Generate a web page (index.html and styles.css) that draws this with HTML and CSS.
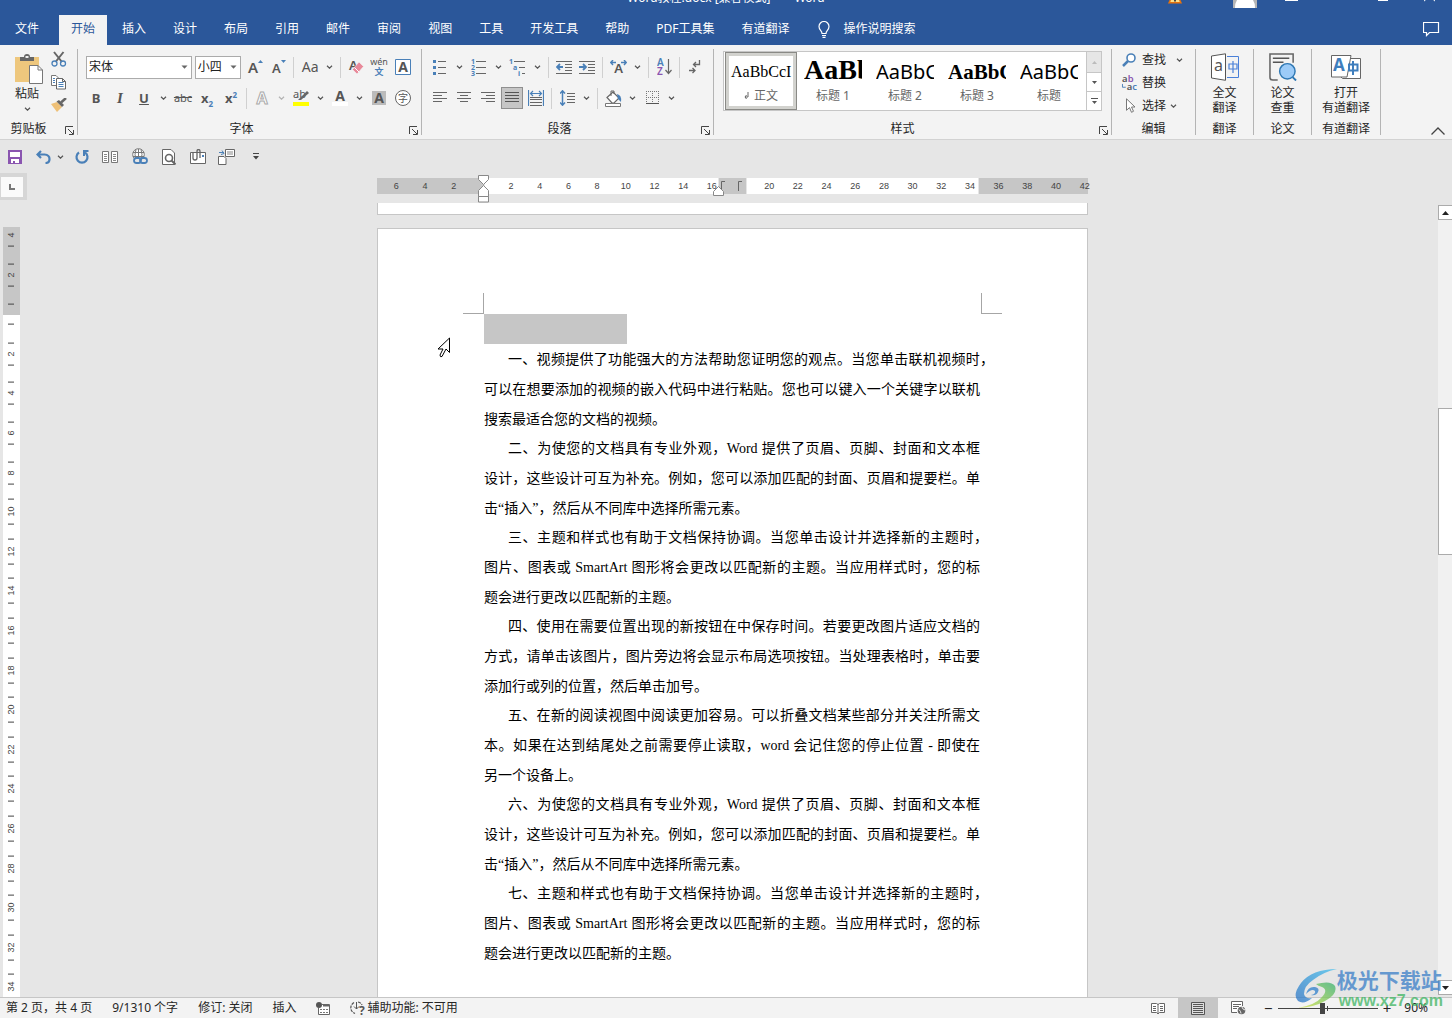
FILE: index.html
```html
<!DOCTYPE html>
<html lang="zh-CN">
<head>
<meta charset="utf-8">
<title>Word教程.docx [兼容模式] - Word</title>
<link rel="stylesheet" href="styles.css">
</head>
<body>
<svg class="defs" aria-hidden="true">
  <symbol id="chev" viewBox="0 0 7 4"><path d="M1 .8 3.5 3.2 6 .8" fill="none" stroke="#555" stroke-width="1.2"/></symbol>
  <symbol id="tri" viewBox="0 0 7 4"><path d="M.5.5h6L3.5 3.8z" fill="#666"/></symbol>
  <symbol id="launch" viewBox="0 0 9 9"><path d="M.5 8V.5H8M3 3l5 5M8.5 4v4.5H4" fill="none" stroke="#444"/></symbol>
</svg>

<header class="top">
  <div class="titlebar">
    <span></span>
    <div class="title"><span>Word教程.docx [兼容模式]</span><span>-</span><span>Word</span></div>
    <div class="window-tools">
      <svg class="warn" width="14" height="4" viewBox="0 0 14 4"><path d="M1.500 0h11L14 3.500H0z" fill="#e8730c"/><path d="M3 0h8l.8 2H2.300z" fill="#fde08a"/><path d="M6 0h2v1.500H6z" fill="#444"/></svg>
      <button aria-label="账户"><svg width="24" height="8" viewBox="0 0 24 8"><path d="M0 0h24v8H0z" fill="#b4b4b4"/><path d="M4 0h16q2 3 2 8H2q0-5 2-8z" fill="#fff"/></svg></button>
      <button aria-label="功能区显示选项"><svg width="13" height="2"><path d="M0 0h13v1H0z" fill="#fff"/></svg></button>
      <button aria-label="最小化"></button>
      <button aria-label="向下还原"><svg width="10" height="2"><path d="M0 0h10v1H0z" fill="#fff"/></svg></button>
      <button aria-label="关闭"><svg width="11" height="2"><path d="M0 1 1.500 0M11 1 9.500 0" stroke="#fff"/></svg></button>
    </div>
  </div>
  <nav class="tabs">
    <button class="file">文件</button>
    <button class="active">开始</button>
    <button>插入</button>
    <button>设计</button>
    <button>布局</button>
    <button>引用</button>
    <button>邮件</button>
    <button>审阅</button>
    <button>视图</button>
    <button>工具</button>
    <button>开发工具</button>
    <button>帮助</button>
    <button>PDF工具集</button>
    <button>有道翻译</button>
    <button class="tell"><svg width="12" height="17" viewBox="0 0 12 17"><path d="M4 12.500c0-3-3-3.500-3-7a5 5 0 0 1 10 0c0 3.500-3 4-3 7zM4 14.500h4M4.500 16.300h3" fill="none" stroke="#fff" stroke-width="1.200"/></svg>操作说明搜索</button>
    <button class="comment" aria-label="批注"><svg width="17" height="16" viewBox="0 0 17 16"><path d="M.5 1.500h15v10H6.500l-3 3v-3h-3z" fill="none" stroke="#fff" stroke-width="1.200"/></svg></button>
  </nav>
</header>

<section class="ribbon">
  <div class="group clipboard">
    <div class="clip-body">
      <button class="paste">
        <svg width="30" height="31" viewBox="0 0 30 31"><path d="M1 3h24v25H1z" fill="#eec77d"/><path d="M6 7V3h4q0-3 3-3t3 3h4v4z" fill="#666"/><path d="M11.500 2h3v2h-3z" fill="#eee"/><path d="M15.500 11.500h8.500l4.500 4.500v13.500h-13z" fill="#fff" stroke="#777"/><path d="M24 11.500V16h4.500" fill="none" stroke="#777"/></svg>
        <span>粘贴</span><svg width="7" height="4"><use href="#chev"/></svg>
      </button>
      <div class="clip-tools">
        <button aria-label="剪切"><svg width="16" height="16" viewBox="0 0 16 16"><path d="M3 1l8 10M12.500 1l-8 10" stroke="#666" stroke-width="2"/><circle cx="3.500" cy="12.500" r="2.500" fill="none" stroke="#4a80b8" stroke-width="1.300"/><circle cx="12" cy="12.500" r="2.500" fill="none" stroke="#4a80b8" stroke-width="1.300"/></svg></button>
        <button aria-label="复制"><svg width="16" height="15" viewBox="0 0 16 15"><path d="M6.500 10.500h-6V.5H5L7.500 3" fill="#fff" stroke="#777"/><path d="M5.500 3.500h6l3 3v7.500h-9z" fill="#fff" stroke="#666"/><path d="M11.500 3.500v3h3" fill="none" stroke="#666"/><path d="M2 3.500h2M2 5.500h2M2 7.500h2M7.500 7.500h5M7.500 9.500h5M7.500 11.500h5" stroke="#4a80b8"/></svg></button>
        <button aria-label="格式刷"><svg width="16" height="14" viewBox="0 0 16 14"><path d="M0 6l6-2 5 5-5 5z" fill="#eec077"/><path d="M5.500 3.500 8 2l5 5-2 2z" fill="#666"/><path d="M10 4.500 15 0" stroke="#666" stroke-width="2.500"/></svg></button>
      </div>
    </div>
    <div class="label">剪贴板<svg class="launch" width="9" height="9"><use href="#launch"/></svg></div>
  </div>

  <div class="group font">
    <div class="rows">
      <div class="row">
        <label class="combo family"><select aria-label="字体"><option>宋体</option></select><svg width="7" height="4"><use href="#tri"/></svg></label>
        <label class="combo size"><select aria-label="字号"><option>小四</option></select><svg width="7" height="4"><use href="#tri"/></svg></label>
        <button class="ic" aria-label="增大字号"><svg width="16" height="16" viewBox="0 0 16 16"><path d="M11 4l2.500-3L16 4z" fill="#4a80b8"/><text x="1" y="14" class="t15">A</text></svg></button>
        <button class="ic" aria-label="减小字号"><svg width="16" height="16" viewBox="0 0 16 16"><path d="M10 1h5l-2.500 3z" fill="#4a80b8"/><text x="1" y="14" class="t13">A</text></svg></button>
        <i class="sep"></i>
        <button class="ic wide" aria-label="更改大小写"><span class="aa">Aa</span></button><button class="dd" aria-label="更多"><svg width="7" height="4"><use href="#chev"/></svg></button>
        <i class="sep"></i>
        <button class="ic" aria-label="清除格式"><svg width="16" height="16" viewBox="0 0 16 16"><text x="1" y="11" class="t13">A</text><path d="M4.500 10.500 11 3l4.500 4.500L9 15z" fill="#e8899a" stroke="#f3f3f3" stroke-width=".6"/><path d="m6.500 8.500 4.500 4.500" stroke="#fff"/></svg></button>
        <button class="ic" aria-label="拼音指南"><svg width="18" height="18" viewBox="0 0 18 18"><text x="9" y="7" text-anchor="middle" class="pinyin">wén</text><text x="9" y="17" text-anchor="middle" class="hanzi blue">文</text></svg></button>
        <button class="ic" aria-label="字符边框"><svg width="16" height="16" viewBox="0 0 16 16"><path d="M.5.5h15v15H.5z" fill="#fff" stroke="#4a80b8"/><text x="8" y="13" text-anchor="middle" class="t14">A</text></svg></button>
      </div>
      <div class="row">
        <button class="ic bold">B</button>
        <button class="ic italic">I</button>
        <button class="ic under">U</button><button class="dd" aria-label="下划线"><svg width="7" height="4"><use href="#chev"/></svg></button>
        <button class="ic strike">abc</button>
        <button class="ic script"><span>x<sub>2</sub></span></button>
        <button class="ic script"><span>x<sup>2</sup></span></button>
        <i class="sep"></i>
        <button class="ic" aria-label="文本效果"><svg width="16" height="16" viewBox="0 0 16 16"><text x="8" y="14" text-anchor="middle" class="outline">A</text></svg></button><button class="dd faint" aria-label="文本效果选项"><svg width="7" height="4"><use href="#chev"/></svg></button>
        <button class="ic" aria-label="突出显示"><svg width="17" height="18" viewBox="0 0 17 18"><text x="0" y="9" class="t11">ab</text><path d="M5 11 14 2l2 2-8 7z" fill="#666"/><path d="M0 13h16v4H0z" fill="#ff0"/></svg></button><button class="dd" aria-label="突出显示选项"><svg width="7" height="4"><use href="#chev"/></svg></button>
        <button class="ic" aria-label="字体颜色"><svg width="16" height="18" viewBox="0 0 16 18"><text x="8" y="12" text-anchor="middle" class="t14">A</text><path d="M0 13h16v4H0z" fill="#fff"/></svg></button><button class="dd" aria-label="字体颜色选项"><svg width="7" height="4"><use href="#chev"/></svg></button>
        <button class="ic" aria-label="字符底纹"><svg width="14" height="14" viewBox="0 0 14 14"><path d="M0 0h14v14H0z" fill="#bbb"/><text x="7" y="12" text-anchor="middle" class="t14">A</text></svg></button>
        <button class="ic" aria-label="带圈字符"><svg width="16" height="16" viewBox="0 0 16 16"><circle cx="8" cy="8" r="7.500" fill="#fff" stroke="#666"/><text x="8" y="12" text-anchor="middle" class="ring">字</text></svg></button>
      </div>
    </div>
    <div class="label">字体<svg class="launch" width="9" height="9"><use href="#launch"/></svg></div>
  </div>

  <div class="group para">
    <div class="rows">
      <div class="row">
        <button class="ic" aria-label="项目符号"><svg width="14" height="16" viewBox="0 0 14 16"><path d="M0 1h3v3H0zM0 7h3v3H0zM0 13h3v3H0z" fill="#4a80b8"/><path d="M5 2.500h8M5 8.500h8M5 14.500h8" stroke="#666"/></svg></button><button class="dd" aria-label="项目符号选项"><svg width="7" height="4"><use href="#chev"/></svg></button>
        <button class="ic" aria-label="编号"><svg width="16" height="18" viewBox="0 0 16 18"><text x="0" y="6" class="num">1</text><text x="0" y="12" class="num">2</text><text x="0" y="18" class="num">3</text><path d="M5 3.500h10M5 9.500h10M5 15.500h10" stroke="#666"/></svg></button><button class="dd" aria-label="编号选项"><svg width="7" height="4"><use href="#chev"/></svg></button>
        <button class="ic" aria-label="多级列表"><svg width="17" height="18" viewBox="0 0 17 18"><text x="0" y="6" class="num">1</text><text x="4" y="12" class="num">a</text><text x="9" y="18" class="num">i</text><path d="M5 3.500h11M10 9.500h6M13 15.500h3" stroke="#666"/></svg></button><button class="dd" aria-label="多级列表选项"><svg width="7" height="4"><use href="#chev"/></svg></button>
        <i class="sep"></i>
        <button class="ic" aria-label="减少缩进"><svg width="16" height="14" viewBox="0 0 16 14"><path d="M0 1.500h16M9 4.500h7M9 7.500h7M9 10.500h7M0 13.500h16" stroke="#666"/><path d="M7 7H1.500M4 4 1 7l3 3" fill="none" stroke="#4a80b8" stroke-width="1.800"/></svg></button>
        <button class="ic" aria-label="增加缩进"><svg width="16" height="14" viewBox="0 0 16 14"><path d="M0 1.500h16M9 4.500h7M9 7.500h7M9 10.500h7M0 13.500h16" stroke="#666"/><path d="M0 7h5.500M4 4l3 3-3 3" fill="none" stroke="#4a80b8" stroke-width="1.800"/></svg></button>
        <i class="sep"></i>
        <button class="ic" aria-label="中文版式"><svg width="17" height="14" viewBox="0 0 17 14"><text x="8.500" y="13" text-anchor="middle" class="t13">A</text><path d="M6 2.500H1M3 0 .8 2.500 3 5M11 2.500h5M14 0l2.200 2.500L14 5" fill="none" stroke="#4a80b8" stroke-width="1.400"/></svg></button><button class="dd" aria-label="中文版式选项"><svg width="7" height="4"><use href="#chev"/></svg></button>
        <i class="sep"></i>
        <button class="ic" aria-label="排序"><svg width="15" height="18" viewBox="0 0 15 18"><text x="0" y="8" class="t10 blue">A</text><text x="0" y="17" class="t10 violet">Z</text><path d="M11.500 1v14M8.500 12l3 3.500 3-3.500" fill="none" stroke="#666" stroke-width="1.200"/></svg></button>
        <i class="sep"></i>
        <button class="ic" aria-label="显示编辑标记"><svg width="12" height="14" viewBox="0 0 12 14"><path d="M10.500 0v4.500H4.500M7 2 4.500 4.500 7 7M0 10.500h5.500M3.500 8 6 10.500 3.500 13" fill="none" stroke="#666" stroke-width="1.300"/></svg></button>
      </div>
      <div class="row">
        <button class="ic" aria-label="左对齐"><svg width="14" height="12" viewBox="0 0 14 12"><path d="M0 .5h14M0 3.500h9M0 6.500h14M0 9.500h9" stroke="#666"/></svg></button>
        <button class="ic" aria-label="居中"><svg width="14" height="12" viewBox="0 0 14 12"><path d="M0 .5h14M3 3.500h8M0 6.500h14M3 9.500h8" stroke="#666"/></svg></button>
        <button class="ic" aria-label="右对齐"><svg width="14" height="12" viewBox="0 0 14 12"><path d="M0 .5h14M5 3.500h9M0 6.500h14M5 9.500h9" stroke="#666"/></svg></button>
        <button class="ic on" aria-label="两端对齐"><svg width="14" height="12" viewBox="0 0 14 12"><path d="M0 .5h14M0 3.500h14M0 6.500h14M0 9.500h14" stroke="#555"/></svg></button>
        <button class="ic" aria-label="分散对齐"><svg width="16" height="17" viewBox="0 0 16 17"><path d="M.5 0v16M15.500 0v16M3 3.500h10M5 1 2.500 3.500 5 6M11 1l2.500 2.500L11 6" fill="none" stroke="#4a80b8" stroke-width="1.200"/><path d="M2 7.500h12M2 9.500h12M2 12.500h12M2 15.500h12" stroke="#666"/></svg></button>
        <i class="sep"></i>
        <button class="ic" aria-label="行距"><svg width="15" height="16" viewBox="0 0 15 16"><path d="M2.500 1v14M0 3.500 2.500.8 5 3.500M0 12.500l2.500 2.700L5 12.500" fill="none" stroke="#4a80b8" stroke-width="1.500"/><path d="M7 3.500h8M7 6.500h8M7 9.500h8M7 12.500h8" stroke="#666"/></svg></button><button class="dd" aria-label="行距选项"><svg width="7" height="4"><use href="#chev"/></svg></button>
        <i class="sep"></i>
        <button class="ic" aria-label="底纹"><svg width="17" height="17" viewBox="0 0 17 17"><path d="M2 7.500 8 2l6 6-5 5H7z" fill="#fff" stroke="#666" stroke-width="1.200"/><path d="M6 6V1h3v3" fill="none" stroke="#666"/><path d="M12 4q5 1 4 8l-3-3z" fill="#4a80b8"/><path d="M.5 13.500h15v3H.5z" fill="#fff" stroke="#777"/></svg></button><button class="dd" aria-label="底纹选项"><svg width="7" height="4"><use href="#chev"/></svg></button>
        <button class="ic" aria-label="边框"><svg width="13" height="14" viewBox="0 0 13 14"><path d="M0 .5h13M0 6.500h13M.5 0v12M6.500 0v12M12.500 0v12" stroke="#777" stroke-dasharray="1 1"/><path d="M0 12.500h13" stroke="#555"/></svg></button><button class="dd" aria-label="边框选项"><svg width="7" height="4"><use href="#chev"/></svg></button>
      </div>
    </div>
    <div class="label">段落<svg class="launch" width="9" height="9"><use href="#launch"/></svg></div>
  </div>

  <div class="group styles">
    <div class="gallery">
      <button class="style selected"><span class="sample s-body">AaBbCcI</span><span class="name"><svg width="5" height="8" viewBox="0 0 5 8"><path d="M4 0v5H1M2.500 3 1 5l1.500 2" fill="none" stroke="#666"/></svg>正文</span></button>
      <button class="style"><span class="sample s-h1">AaBb</span><span class="name">标题 1</span></button>
      <button class="style"><span class="sample s-h2">AaBbC</span><span class="name">标题 2</span></button>
      <button class="style"><span class="sample s-h3">AaBbC</span><span class="name">标题 3</span></button>
      <button class="style"><span class="sample s-h2">AaBbC</span><span class="name">标题</span></button>
      <div class="gallery-nav">
        <button class="off" aria-label="上一行"><svg width="5" height="3" viewBox="0 0 5 3"><path d="M0 3h5L2.500 0z" fill="#bbb"/></svg></button>
        <button aria-label="下一行"><svg width="5" height="3" viewBox="0 0 5 3"><path d="M0 0h5L2.500 3z" fill="#555"/></svg></button>
        <button aria-label="更多样式"><svg width="7" height="6" viewBox="0 0 7 6"><path d="M0 .5h7" stroke="#555"/><path d="M1 3h5L3.500 6z" fill="#555"/></svg></button>
      </div>
    </div>
    <div class="label">样式<svg class="launch" width="9" height="9"><use href="#launch"/></svg></div>
  </div>

  <div class="group edit">
    <div class="edit-list">
      <button><svg width="16" height="14" viewBox="0 0 16 14"><circle cx="9" cy="5" r="4" fill="#fff" stroke="#4a80b8" stroke-width="1.600"/><path d="M6 8l-5 5" stroke="#4a80b8" stroke-width="2.500"/></svg>查找<svg class="far" width="7" height="4"><use href="#chev"/></svg></button>
      <button><svg width="17" height="18" viewBox="0 0 17 18"><text x="0" y="8" class="t10">a</text><text x="6" y="8" class="t10 violet">b</text><text x="5" y="16" class="t10">a</text><text x="11" y="16" class="t10 blue">c</text><path d="M.5 10v3.500H4" fill="none" stroke="#4a80b8"/></svg>替换</button>
      <button><svg width="16" height="15" viewBox="0 0 16 15"><path d="M4.500.8v11.500l3-2.700 2 4.700 2-1-2-4.300h3.500z" fill="#fff" stroke="#777"/></svg>选择<svg class="near" width="7" height="4"><use href="#chev"/></svg></button>
    </div>
    <div class="label">编辑</div>
  </div>

  <div class="group addin">
    <button class="big"><svg width="28" height="28" viewBox="0 0 28 28"><path d="M.5 3 14.500.8v26.500L.5 25z" fill="#fff" stroke="#555"/><text x="3" y="18" class="book">a</text><path d="M16 3.500h11.500v21H16" fill="none" stroke="#4a80d8"/><path d="M22 8v12M18 11h8v5h-8z" fill="none" stroke="#4a80d8" stroke-width="1.200"/></svg><span>全文<br>翻译</span></button>
    <div class="label">翻译</div>
  </div>
  <div class="group addin">
    <button class="big"><svg width="28" height="28" viewBox="0 0 29 29"><path d="M9 28H4q-3 0-3-3V1h24v9" fill="none" stroke="#666" stroke-width="1.600"/><path d="M4 5.500h17M4 9.500h11" stroke="#555" stroke-width="1.600"/><circle cx="19" cy="19" r="8" fill="#9ccbf8" stroke="#2f78b4" stroke-width="1.500"/><path d="m24.500 25 3.500 3.500" stroke="#2f78b4" stroke-width="2"/></svg><span>论文<br>查重</span></button>
    <div class="label">论文</div>
  </div>
  <div class="group addin wide-addin">
    <button class="big"><svg width="30" height="28" viewBox="0 0 30 28"><path d="M17 5.500h12.500v20h-18L10 24" fill="#fff" stroke="#666"/><path d="M.5 2.500H20L16 24H.5z" fill="#fff" stroke="#666"/><text x="2" y="18" class="bigA">A</text><path d="M22 8v14M18 11.500h8.500v6H18z" fill="none" stroke="#3f7ebd" stroke-width="2"/></svg><span>打开<br>有道翻译</span></button>
    <div class="label">有道翻译</div>
  </div>
  <div class="collapse"><button aria-label="折叠功能区"><svg width="14" height="8" viewBox="0 0 14 8"><path d="M.5 7.500 7 1l6.500 6.500" fill="none" stroke="#444" stroke-width="1.300"/></svg></button></div>
</section>

<div class="qat">
  <button aria-label="保存"><svg width="14" height="14" viewBox="0 0 14 14"><path d="M0 0h14v14H0z" fill="#8a55b0"/><path d="M2 2h10v5H2zM3 9h8v4H3z" fill="#fff"/><path d="M5 11h2v2H5z" fill="#8a55b0"/></svg></button>
  <button aria-label="撤消"><svg width="15" height="14" viewBox="0 0 15 14"><path d="M5 1 1.500 4.500 5 8M2 4.500h6.500q5 .5 5 4.500t-4 4" fill="none" stroke="#4a80b8" stroke-width="2.200"/></svg></button>
  <button class="tight" aria-label="撤消选项"><svg width="7" height="4"><use href="#chev"/></svg></button>
  <button aria-label="重复"><svg width="14" height="14" viewBox="0 0 14 14"><path d="M4 2.500A5.500 5.500 0 1 0 10 2.500" fill="none" stroke="#4a80b8" stroke-width="2.200"/><path d="M8 1h5.500M9 0v6" stroke="#4a80b8" stroke-width="2"/></svg></button>
  <button aria-label="双页"><svg width="17" height="12" viewBox="0 0 17 12"><path d="M.5.5h6v11h-6zM9.500.5h6v11h-6z" fill="#fff" stroke="#777"/><path d="M2 3.500h3M2 5.500h3M2 7.500h3M2 9.500h3M11 3.500h3M11 5.500h3M11 7.500h3M11 9.500h3" stroke="#888"/></svg></button>
  <button aria-label="超链接"><svg width="16" height="17" viewBox="0 0 16 17"><circle cx="6.500" cy="6.500" r="5.800" fill="#fff" stroke="#777"/><path d="M1 4.500h11M1 8.500h11M6.500 1v11M4 1.500q-2 5 0 10M9 1.500q2 5 0 10" fill="none" stroke="#777"/><rect x="2" y="10" width="7" height="5" rx="2.500" fill="#e6e6e6" stroke="#4a80b8" stroke-width="1.800"/><rect x="8" y="10" width="7" height="5" rx="2.500" fill="none" stroke="#4a80b8" stroke-width="1.800"/></svg></button>
  <button aria-label="打印预览"><svg width="14" height="16" viewBox="0 0 14 16"><path d="M.5.5H9l3.500 3.500v11.500H.5z" fill="#fff" stroke="#666"/><circle cx="7" cy="9" r="3.500" fill="#fff" stroke="#666" stroke-width="1.600"/><path d="m9.500 11.500 4 4" stroke="#666" stroke-width="2"/></svg></button>
  <button aria-label="附件"><svg width="16" height="16" viewBox="0 0 16 16"><path d="M.5 3.500h15v11H.5z" fill="#fff" stroke="#666"/><path d="M3 3.500V9q0 2 2 2t2-2V2.500q0-2 1.500-2T10 2.500V9" fill="none" stroke="#666" stroke-width="1.300"/><path d="M12 6h2v2h-2z" fill="#4a80b8"/></svg></button>
  <button aria-label="切换窗口"><svg width="17" height="16" viewBox="0 0 17 16"><path d="M7.500.5h9v7h-9zM.5 7.500H6l2 2v6H.5z" fill="#fff" stroke="#666"/><path d="M9 3h6M9 5h6" stroke="#888"/><path d="M1 3.500h5M4 1.500l2 3-3 1" fill="none" stroke="#4a80b8"/></svg></button>
  <button aria-label="自定义快速访问工具栏"><svg width="6" height="7" viewBox="0 0 6 7"><path d="M0 .5h6" stroke="#444"/><path d="M0 3h6L3 6.500z" fill="#444"/></svg></button>
</div>

<main class="workspace">
  <div class="left-rail">
    <button class="tabstop" aria-label="左对齐制表符"><svg width="6" height="6" viewBox="0 0 6 6"><path d="M1 0v5h5" fill="none" stroke="#777" stroke-width="2"/></svg></button>
    <div class="vruler"><div class="vscale">
      <span>4</span><span>2</span><span></span><span>2</span><span>4</span><span>6</span><span>8</span><span>10</span><span>12</span><span>14</span><span>16</span><span>18</span><span>20</span><span>22</span><span>24</span><span>26</span><span>28</span><span>30</span><span>32</span><span>34</span>
    </div></div>
  </div>

  <div class="canvas">
    <div class="hruler">
      <div class="bands"><i class="dark before"></i><i class="col"></i><i class="dark gutter"></i><i class="col"></i><i class="dark after"></i></div>
      <div class="hscale">
        <span>6</span><span>4</span><span>2</span><span></span><span>2</span><span>4</span><span>6</span><span>8</span><span>10</span><span>12</span><span>14</span><span>16</span><span></span><span>20</span><span>22</span><span>24</span><span>26</span><span>28</span><span>30</span><span>32</span><span>34</span><span>36</span><span>38</span><span>40</span><span>42</span>
      </div>
      <svg class="indent" width="12" height="28" viewBox="0 0 12 28"><path d="M.5.500h10v4L5.500 9.500.5 4.500zM5.500 10.500l5 5v6H.5v-6zM.5 21.500h10v5.500H.5z" fill="#fff" stroke="#888"/></svg>
      <svg class="column-mark" width="34" height="20" viewBox="0 0 34 20"><path d="M8.500 14V4.500H12M25.500 14V4.500H29" fill="none" stroke="#666"/><path d="M.5 18.500v-4L5.500 9.500l5 5v4z" fill="#fff" stroke="#888"/></svg>
    </div>
    <div class="page-end"></div>
    <article class="page">
      <i class="crop left"></i><i class="crop right"></i>
      <div class="selection"></div>
      <p><span class="first hang">一、视频提供了功能强大的方法帮助您证明您的观点。当您单击联机视频时，</span><span>可以在想要添加的视频的嵌入代码中进行粘贴。您也可以键入一个关键字以联机</span><span class="last">搜索最适合您的文档的视频。</span></p>
      <p><span class="first">二、为使您的文档具有专业外观，Word 提供了页眉、页脚、封面和文本框</span><span>设计，这些设计可互为补充。例如，您可以添加匹配的封面、页眉和提要栏。单</span><span class="last">击“插入”，然后从不同库中选择所需元素。</span></p>
      <p><span class="first hang-half">三、主题和样式也有助于文档保持协调。当您单击设计并选择新的主题时，</span><span>图片、图表或 SmartArt 图形将会更改以匹配新的主题。当应用样式时，您的标</span><span class="last">题会进行更改以匹配新的主题。</span></p>
      <p><span class="first">四、使用在需要位置出现的新按钮在中保存时间。若要更改图片适应文档的</span><span>方式，请单击该图片，图片旁边将会显示布局选项按钮。当处理表格时，单击要</span><span class="last">添加行或列的位置，然后单击加号。</span></p>
      <p><span class="first">五、在新的阅读视图中阅读更加容易。可以折叠文档某些部分并关注所需文</span><span>本。如果在达到结尾处之前需要停止读取，word 会记住您的停止位置 - 即使在</span><span class="last">另一个设备上。</span></p>
      <p><span class="first">六、为使您的文档具有专业外观，Word 提供了页眉、页脚、封面和文本框</span><span>设计，这些设计可互为补充。例如，您可以添加匹配的封面、页眉和提要栏。单</span><span class="last">击“插入”，然后从不同库中选择所需元素。</span></p>
      <p><span class="first hang-half">七、主题和样式也有助于文档保持协调。当您单击设计并选择新的主题时，</span><span>图片、图表或 SmartArt 图形将会更改以匹配新的主题。当应用样式时，您的标</span><span class="last">题会进行更改以匹配新的主题。</span></p>
      <svg class="pointer" width="15" height="22" viewBox="0 0 15 22"><path d="M12.500 1v14.500L9 12 5 19.500Q3 20.500 3 18L6 12H1z" fill="#fff" stroke="#000"/></svg>
    </article>
  </div>

  <div class="scrollbar">
    <button aria-label="向上滚动"><svg width="7" height="4" viewBox="0 0 7 4"><path d="M0 4h7L3.500 0z" fill="#222"/></svg></button>
    <div class="track"><div class="thumb"></div></div>
    <button aria-label="向下滚动"><svg width="7" height="4" viewBox="0 0 7 4"><path d="M0 0h7L3.500 4z" fill="#222"/></svg></button>
  </div>
</main>

<footer class="status">
  <button>第 2 页，共 4 页</button>
  <button>9/1310 个字</button>
  <button>修订: 关闭</button>
  <button>插入</button>
  <button aria-label="宏录制"><svg width="14" height="13" viewBox="0 0 14 13"><path d="M6 2.500h7.500v10H2.500V6" fill="#fff" stroke="#666"/><circle cx="3" cy="3" r="3" fill="#555"/><path d="M7 3.500h6" stroke="#666" stroke-width="2"/><path d="M4 7.500h8M4 10.500h8" stroke="#777" stroke-dasharray="2 1"/></svg></button>
  <button class="access"><svg width="16" height="15" viewBox="0 0 16 15"><path d="M4 1.500Q.8 3.500.8 7T5 12.500M8 1q3 .5 4 3" fill="none" stroke="#555" stroke-width="1.200" stroke-dasharray="3 1"/><path d="M6.500 1v7M4 5.500 6.500 8 9 5.500" fill="none" stroke="#555"/><text x="9" y="14" class="q">?</text></svg>辅助功能: 不可用</button>
  <div class="views">
    <button aria-label="阅读视图"><svg width="14" height="13" viewBox="0 0 14 13"><path d="M.5 1.500h5l1.500 1 1.500-1h5v9h-5L7 12l-1.500-1.500h-5zM7 2v10" fill="#fff" stroke="#666"/><path d="M2 4.500h3M2 6.500h3M2 8.500h3M9 4.500h3M9 6.500h3M9 8.500h3" stroke="#666"/></svg></button>
    <button class="current" aria-label="页面视图"><svg width="14" height="13" viewBox="0 0 14 13"><path d="M.5.500h13v12H.5z" fill="#ddd" stroke="#555"/><path d="M2 2.500h10M2 4.500h10M2 6.500h10M2 8.500h10M2 10.500h10" stroke="#555"/></svg></button>
    <button aria-label="Web 版式视图"><svg width="15" height="14" viewBox="0 0 15 14"><path d="M6 11.500H.5V.5h11V5" fill="#fff" stroke="#666"/><path d="M2 3.500h8M2 5.500h6M2 7.500h4" stroke="#666"/><circle cx="10.500" cy="9.500" r="3.800" fill="#666"/><path d="M8 8.500q2 2 2 4M11 6q0 2 3 3" fill="none" stroke="#eee"/></svg></button>
  </div>
  <div class="zoom">
    <button>−</button>
    <input type="range" min="10" max="190" value="91" aria-label="缩放">
    <button>+</button>
  </div>
  <button class="percent">90%</button>
</footer>

<div class="watermark">
  <svg width="42" height="42" viewBox="0 0 42 42"><defs><linearGradient id="wb" x1="1" y1="0" x2="0" y2="1"><stop offset="0" stop-color="#42c0ee"/><stop offset="1" stop-color="#2a72c4"/></linearGradient><linearGradient id="wg" x1="1" y1="0" x2="0" y2="1"><stop offset="0" stop-color="#35b070"/><stop offset="1" stop-color="#d6e23a"/></linearGradient></defs><path d="M42 1Q17 1 6 15q-9 12-3 18 6 4 14-3-7 1-8-4 0-8 9-14Q28 4 42 1z" fill="url(#wb)"/><path d="M21 16q15-4 19 2 3 8-10 15-10 6-27 7 17-3 23-10 8-8 1-11-4-1-6-3z" fill="url(#wg)"/><path d="M11 26q2-8 9-7 5 1 3 5-2 4-7 3 5-1 4-4-3-3-9 3z" fill="#2f80cc"/></svg>
  <div><strong>极光下载站</strong><em>www.xz7.com</em></div>
</div>
</body>
</html>
```
FILE: styles.css
```css
* { box-sizing: border-box; }

body {
  margin: 0;
  height: 100vh;
  display: flex;
  flex-direction: column;
  overflow: hidden;
  background: #e6e6e6;
  color: #262626;
  font: 12px/16px "Noto Sans", "Noto Sans CJK SC", sans-serif;
}

button {
  display: flex;
  align-items: center;
  justify-content: center;
  padding: 0;
  border: 0;
  background: none;
  color: inherit;
  font: inherit;
  white-space: nowrap;
}

svg { display: block; flex: none; }
.defs { position: absolute; width: 0; height: 0; }

/* Title bar and tabs */
.top { background: #2b579a; color: #fff; flex: none; }
.titlebar {
  display: grid;
  grid-template-columns: 1fr auto 1fr;
  height: 15px;
  overflow: hidden;
}
.title { display: flex; gap: 10px; margin-top: -10px; white-space: pre; }
.window-tools { display: flex; justify-content: flex-end; align-items: flex-start; }
.window-tools button { width: 46px; align-items: flex-start; }
.warn { margin-right: 40px; }

.tabs { display: flex; gap: 3px; height: 30px; }
.tabs button { padding: 0 12px; padding-bottom: 2px; }
.tabs .file { padding: 0 17px 2px 15px; }
.tabs .active { background: #f3f3f3; color: #2b579a; }
.tabs .tell { gap: 13px; padding-left: 14px; }
.tabs .comment { margin-left: auto; }

/* Ribbon */
.ribbon {
  display: flex;
  flex: none;
  height: 95px;
  padding: 4px 0;
  background: #f3f3f3;
  border-bottom: 1px solid #d2d2d2;
}
.group {
  display: flex;
  flex-direction: column;
  justify-content: space-between;
  flex: none;
  border-right: 1px solid #b4b4b4;
}
.label {
  position: relative;
  text-align: center;
  line-height: 13px;
}
.launch { position: absolute; right: 3px; bottom: 0; }

.clipboard { width: 78px; }
.clipboard .label { padding-right: 20px; }
.clip-body { display: flex; padding-left: 11px; gap: 8px; }
.paste { flex-direction: column; width: 32px; padding-top: 3px; }
.paste > svg:first-child { margin-left: 4px; }
.paste span { line-height: 18px; margin-bottom: 4px; }
.clip-tools { display: flex; flex-direction: column; gap: 8px; padding-top: 2px; }

.font { width: 344px; }
.para { width: 292px; }
.font .label, .para .label { padding-right: 16px; }
.rows { display: flex; flex-direction: column; gap: 7px; padding: 6px 6px 0; }
.row { display: flex; align-items: center; height: 24px; }
.ic { width: 24px; height: 24px; color: #555; }
.ic.on { width: 22px; height: 22px; margin: 0 1px; background: #c6c6c6; outline: 1px solid #8f8f8f; outline-offset: -1px; }
.dd { width: 15px; height: 24px; justify-content: flex-start; padding-left: 4px; }
.dd.faint { opacity: .4; }
.sep { width: 1px; height: 21px; margin: 0 3px; background: #d0d0d0; }
.wide { width: 26px; margin-right: -1px; }

.combo { display: grid; align-items: center; height: 23px; }
.combo select, .combo svg { grid-area: 1 / 1; }
.combo svg { justify-self: end; margin-right: 4px; pointer-events: none; }
.combo select {
  appearance: none;
  width: 100%;
  height: 23px;
  padding: 0 2px;
  border: 1px solid #ababab;
  border-radius: 0;
  background: #fff;
  color: #222;
  font: inherit;
}
.family { width: 107px; margin-left: 2px; }
.size { width: 47px; margin: 0 2px 0 3px; }

.aa { font-size: 14px; }
.bold { font-weight: 700; font-size: 13px; }
.italic { font: italic 700 15px/16px "Liberation Serif", serif; }
.under { font-size: 13px; font-weight: 700; text-decoration: underline; }
.strike { font-size: 11px; text-decoration: line-through; }
.script { font-size: 13px; font-weight: 700; }
.script sub, .script sup { color: #4a80b8; font-size: 8px; line-height: 0; }

svg text { fill: #555; font-family: "Noto Sans", "Noto Sans CJK SC", sans-serif; }
.t15 { font-size: 15px; font-weight: 600; }
.t14 { font-size: 14px; font-weight: 700; }
.t13 { font-size: 13px; font-weight: 600; }
.t11 { font-size: 11px; }
.t10 { font-size: 10px; font-weight: 600; }
.pinyin { font-size: 9px; }
.hanzi { font-size: 9px; font-weight: 700; }
.num { font-size: 7px; font-weight: 700; }
svg .blue, svg .num { fill: #4a80b8; }
svg .violet { fill: #8a55b0; }
svg .outline { font-size: 16px; font-weight: 700; fill: #fff; stroke: #aaa; }
.ring { font-size: 10px; }
.book { font-size: 16px; }
svg .bigA { font-size: 17px; font-weight: 700; fill: #3f7ebd; }

.styles { flex: 1 1 398px; padding: 0 0 0 9px; }
.styles .label { margin-left: -9px; padding-right: 20px; }
.gallery {
  display: flex;
  width: 379px;
  height: 60px;
  margin: 2px auto 0 0;
  padding-left: 1px;
  border: 1px solid #c6c6c6;
  background: #fff;
}
.style {
  flex-direction: column;
  justify-content: flex-start;
  width: 72px;
  height: 58px;
  padding-top: 1px;
  color: #666;
}
.style.selected { outline: 1px solid #8a8a86; outline-offset: -1px; box-shadow: inset 0 0 0 4px #d2d2ce; }
.sample {
  width: 58px;
  height: 35px;
  line-height: 38px;
  overflow: hidden;
  text-align: left;
  color: #000;
}
.s-body { width: 62px; padding-left: 1px; font-family: "Liberation Serif", serif; font-size: 16px; }
.s-h1 { font-family: "Liberation Serif", serif; font-size: 28px; font-weight: 700; line-height: 34px; }
.s-h2 { font-size: 20px; }
.s-h3 { font-family: "Liberation Serif", serif; font-size: 21px; font-weight: 700; }
.name { display: flex; align-items: center; gap: 5px; }
.gallery-nav {
  display: grid;
  grid-template-rows: 21px 19px 18px;
  width: 15px;
  margin-left: auto;
  border-left: 1px solid #c6c6c6;
}
.gallery-nav button { border-bottom: 1px solid #c6c6c6; }
.gallery-nav button:last-child { border-bottom: 0; }
.gallery-nav .off { background: #e6e6e6; }

.edit { width: 84px; }
.edit-list { display: flex; flex-direction: column; padding-left: 10px; }
.edit-list button { justify-content: flex-start; height: 23px; gap: 4px; padding-bottom: 2px; }
.edit-list button > svg:first-child { width: 16px; overflow: visible; }
.far { margin-left: 6px; }

.addin { width: 58px; }
.wide-addin { width: 69px; }
.big { flex-direction: column; gap: 4px; padding-top: 4px; line-height: 15px; }
.collapse { display: flex; align-items: flex-end; justify-content: flex-end; width: 71px; padding-right: 7px; }

/* Quick access toolbar */
.qat { display: flex; align-items: center; flex: none; height: 33px; }
.qat button { width: 29px; height: 24px; }
.qat .tight { width: 7px; margin: 0 3px 0 -1px; }

/* Editing area */
.workspace {
  display: grid;
  grid-template-columns: 27px minmax(0, 1fr) 14px;
  grid-template-rows: minmax(0, 1fr);
  flex: 1;
  min-height: 0;
}
.left-rail { display: flex; flex-direction: column; min-height: 0; }
.tabstop { flex: none; width: 27px; height: 27px; background: #fafafa; border: solid #d6d6d6; border-width: 4px 4px 3px 1px; }
.vruler {
  flex: 1;
  width: 17px;
  margin: 27px 0 0 3px;
  overflow: hidden;
  background: linear-gradient(#c6c6c6 88px, #fff 88px);
}
.vscale { display: grid; grid-template-rows: repeat(20, 1fr); height: 792px; margin-top: -12px; }
.vscale span {
  display: flex;
  align-items: center;
  justify-content: space-evenly;
  writing-mode: vertical-rl;
  transform: rotate(180deg);
  font: 9px/17px "Liberation Sans", sans-serif;
  color: #444;
}
.vscale span:empty { justify-content: space-around; }
.vscale span::before, .vscale span::after { content: ""; width: 6px; height: 1px; background: #444; }

.canvas { min-width: 0; overflow: hidden; }
.hruler { position: relative; width: 711px; height: 30px; margin: 0 auto; padding-top: 5px; }
.bands { display: flex; gap: 1px; height: 16px; }
.bands .col { flex: 1; background: #fff; }
.bands .dark { background: #c6c6c6; }
.bands .before { width: 107px; }
.bands .gutter { width: 27px; }
.bands .after { width: 109px; }
.bands .col:nth-child(2) { flex: 0 0 233px; }
.hscale {
  display: grid;
  grid-template-columns: repeat(25, 1fr);
  width: 717px;
  margin: -16px -13px 0 5px;
  text-align: center;
  font: 9px/17px "Liberation Sans", sans-serif;
  color: #444;
}
.indent { position: absolute; left: 101px; top: 2px; }
.column-mark { position: absolute; left: 336px; top: 4px; }

.page-end, .page { width: 711px; margin: 0 auto; background: #fff; border: 1px solid #c6c6c6; }
.page-end { height: 12px; border-top: 0; }
.page {
  position: relative;
  min-height: 1004px;
  margin-top: 13px;
  padding: 85px 107px 85px 106px;
  color: #000;
  font: 14px/30px "Liberation Serif", "Noto Sans CJK SC", serif;
}
.selection { width: 143px; height: 30px; margin-bottom: 1px; background: #c6c6c6; }
.crop { position: absolute; top: 64px; width: 21px; height: 21px; border-bottom: 1px solid #a6a6a6; }
.crop.left { left: 85px; border-right: 1px solid #a6a6a6; }
.crop.right { right: 85px; border-left: 1px solid #a6a6a6; }
.page p { display: grid; grid-template-rows: repeat(3, 1fr); height: 89px; margin: 0; }
.page p span { text-align: justify; text-align-last: justify; white-space: nowrap; }
.page .first { margin-left: 24px; }
.page .hang { margin-right: -14px; }
.page .hang-half { margin-right: -8px; }
.page p .last { text-align-last: left; }
.pointer { position: absolute; left: 59px; top: 108px; }

.scrollbar { display: flex; flex-direction: column; padding: 32px 0 2px; }
.scrollbar button { flex: none; height: 15px; background: #fff; border: 1px solid #ababab; border-right: 0; }
.track { flex: 1; background: #f1f1f1; padding-top: 188px; }
.thumb { height: 147px; background: #fff; border: 1px solid #ababab; border-right: 0; }

/* Status bar */
.status {
  display: flex;
  align-items: stretch;
  flex: none;
  height: 21px;
  padding: 0 24px 0 6px;
  gap: 20px;
  background: #f3f3f3;
  border-top: 1px solid #c6c6c6;
}
.access { gap: 1px; }
.q { font-size: 12px; font-weight: 700; }
.views { display: flex; margin-left: auto; }
.views button { width: 40px; }
.views .current { background: #c6c6c6; }
.zoom { display: flex; align-items: center; gap: 5px; margin-left: -14px; font-size: 15px; }
.zoom input {
  appearance: none;
  width: 100px;
  height: 12px;
  margin: 0;
  background: linear-gradient(#444, #444) 50% 50% / 100% 1px no-repeat, linear-gradient(#444, #444) 50% 50% / 1px 5px no-repeat;
}
.zoom input::-webkit-slider-thumb { appearance: none; width: 5px; height: 11px; background: #444; }
.percent { margin-left: -7px; }

.watermark {
  position: absolute;
  right: 9px;
  bottom: 8px;
  display: flex;
  opacity: .75;
  pointer-events: none;
}
.watermark div { display: flex; flex-direction: column; }
.watermark strong { color: #3a7fc8; font-size: 21px; line-height: 24px; }
.watermark em { padding-left: 2px; color: #3fb562; font: 700 16px/18px "Liberation Sans", sans-serif; }
```
